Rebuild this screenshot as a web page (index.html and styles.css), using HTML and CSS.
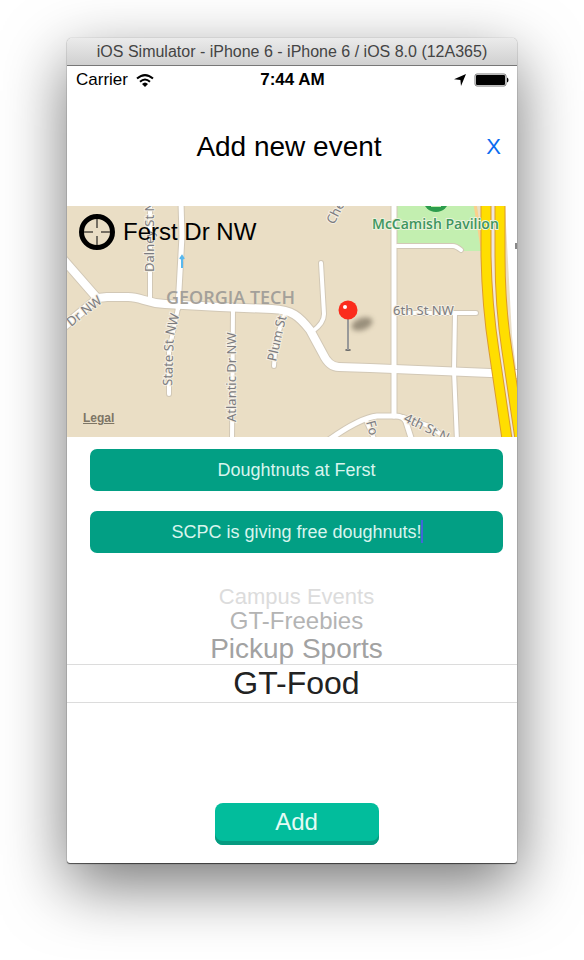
FILE: index.html
```html
<!DOCTYPE html>
<html lang="en">
<head>
    <meta charset="utf-8">
    <meta name="viewport" content="width=device-width, initial-scale=1.0" />
    <title>Add new event</title>
    <!-- Stylesheet -->
    <link rel="stylesheet" href="styles.css">
</head>
<body>
    <div class="window">
        <div class="title-bar">iOS Simulator - iPhone 6 - iPhone 6 / iOS 8.0 (12A365)</div>

        <div class="status-bar">
            <div class="carrier">
                <span>Carrier</span>
                <svg class="wifi" viewBox="0 0 18 13" width="18" height="13">
                    <path d="M1 4.6 Q9 -2.4 17 4.6" />
                    <path d="M4 7.8 Q9 3.2 14 7.8" />
                    <path class="dot" d="M6 10 Q9 7 12 10 L9 13 Z" />
                </svg>
            </div>
            <div class="time">7:44 AM</div>
            <div class="status-icons">
                <svg viewBox="0 0 12 12" width="12" height="12">
                    <path d="M12 0 L7 12 L6.4 6 L0 5.2 Z" />
                </svg>
                <svg viewBox="0 0 35 14" width="35" height="14">
                    <rect class="battery-case" x="1" y="1" width="31" height="12" rx="2" />
                    <rect x="2" y="2" width="29" height="10" rx="1" />
                    <path d="M33 4.5 Q34.5 5 34.5 7 Q34.5 9 33 9.5 Z" />
                </svg>
            </div>
        </div>

        <header class="header">
            <h1>Add new event</h1>
            <button type="button" class="close">X</button>
        </header>

        <form>
            <div class="map">
                <svg class="map-tiles" viewBox="0 0 450 231" preserveAspectRatio="xMidYMid slice">
                    <defs>
                        <filter id="blur" x="-50%" y="-50%" width="200%" height="200%">
                            <feGaussianBlur stdDeviation="2.5" />
                        </filter>
                        <g id="roads">
                            <path class="wide" d="M-4 53 L30 92 M-4 121 L31 92 L40 91 L61 91 C75 91 78 97 98 98 L153 101 L205 103 C225 104 232 110 243 124 L256 148 Q262 161 272 161 L303 162 L423 167 L452 168" />
                            <path class="mid" d="M114 -4 L115 30 L111 102" />
                            <path class="mid" d="M327 -4 V210" />
                            <path class="mid" d="M259 236 Q292 212 310 210 H328 Q337 210 339 216 L345 235" />
                            <path d="M111 102 L102 145 V188" />
                            <path d="M83 -4 V97" />
                            <path d="M166 103 L165 235" />
                            <path d="M218 108 Q208 130 207 160" />
                            <path d="M254 57 L257 108 Q257 117 246 125" />
                            <path d="M330 40 H386 Q389 40 394 44" />
                            <path d="M327 107 H409 M388 107 L387 165 L390 235" />
                            <path d="M336 211 L365 221 L380 234" />
                            <path d="M299 214 L308 235" />
                        </g>
                    </defs>
                    <rect class="land" width="450" height="231" />
                    <path class="park" d="M330 0 H410 L415 45 H394 L387 40 H330 Z" />
                    <path class="freeway-side" d="M438 0 H450 V170 L445 130 Z" />
                    <use href="#roads" class="road-edge" />
                    <use href="#roads" class="road" />
                    <path class="ramp" d="M408 -2 L416 48" />
                    <path class="freeway-gap" d="M425 0 V50 Q426 100 434 145 L449 231" />
                    <path class="freeway-edge" d="M419 -2 L419 50 Q420 100 427 145 L440 233" />
                    <path class="freeway" d="M419 -2 L419 50 Q420 100 427 145 L440 233" />
                    <path class="freeway-edge" d="M433 -2 L433 50 Q433 100 440 145 L453 233" />
                    <path class="freeway" d="M433 -2 L433 50 Q433 100 440 145 L453 233" />
                    <path class="one-way" d="M115 62 V50 M113 53 L115 50 L117 53" />
                    <circle class="park-badge" cx="369" cy="-7" r="13" />
                    <path class="park-icon" d="M364 0 H374" />

                    <g class="street">
                        <text transform="translate(87 66) rotate(-90)">Dalney St N</text>
                        <text transform="translate(4 121) rotate(-38)">Dr NW</text>
                        <text transform="translate(105 180) rotate(-88)">State St</text>
                        <text transform="translate(107 130) rotate(-76)">NW</text>
                        <text transform="translate(169 216) rotate(-90)">Atlantic Dr NW</text>
                        <text transform="translate(209 156) rotate(-77)">Plum St</text>
                        <text transform="translate(267 19) rotate(-63)">Che</text>
                        <text x="326" y="109">6th St NW</text>
                        <text transform="translate(336 215) rotate(26)">4th St N</text>
                        <text transform="translate(299 216) rotate(75)">Fo</text>
                    </g>
                    <text class="campus" x="99" y="98">GEORGIA TECH</text>
                    <text class="pavilion" x="305" y="23">McCamish Pavilion</text>
                    <path class="clipped-label" d="M449 37 V43" />

                    <ellipse class="pin-shadow" cx="295" cy="118" rx="11" ry="6" transform="rotate(-20 295 118)" />
                    <ellipse class="pin-foot" cx="281" cy="144" rx="3" ry="1" />
                    <path class="pin-needle" d="M281 112 V144" />
                    <circle class="pin-head" cx="281" cy="104" r="9.5" />
                    <circle class="pin-shine" cx="278" cy="101" r="2" />
                </svg>
                <div class="location">
                    <svg viewBox="0 0 36 36" width="36" height="36">
                        <circle cx="18" cy="18" r="15.5" />
                        <path d="M18 5 V14 M18 22 V31 M5 18 H14 M22 18 H31" />
                    </svg>
                    <span>Ferst Dr NW</span>
                </div>
                <a href="#" class="legal">Legal</a>
            </div>

            <div class="fields">
                <div class="field">
                    <input type="text" aria-label="Event name" value="Doughtnuts at Ferst" />
                </div>
                <div class="field">
                    <input type="text" aria-label="Description" value="SCPC is giving free doughnuts!" />
                    <span class="caret"></span>
                </div>
            </div>

            <!-- Category wheel -->
            <div class="picker" role="radiogroup" aria-label="Category">
                <label class="far"><input type="radio" name="category" />Campus Events</label>
                <label class="middle"><input type="radio" name="category" />GT-Freebies</label>
                <label class="near"><input type="radio" name="category" />Pickup Sports</label>
                <label class="selected"><input type="radio" name="category" checked />GT-Food</label>
            </div>

            <div class="actions">
                <button type="button" class="add">Add</button>
            </div>
        </form>
    </div>
</body>
</html>
```
FILE: styles.css
```css
* {
    padding: 0;
    margin: 0;
    box-sizing: border-box;
}

body {
    background-color: #fff;
    padding: 38px 67px 96px;
    font-family: "Liberation Sans", Arial, sans-serif;
    color: #000;
}

button,
input {
    font-family: inherit;
    border: none;
}

.window {
    background-color: #fff;
    border-radius: 5px 5px 3px 3px;
    box-shadow: 0 1px 1px rgba(0, 0, 0, 0.6), 0 0 1px rgba(0, 0, 0, 0.5),
        0 22px 64px rgba(0, 0, 0, 0.54);
}

.title-bar {
    height: 28px;
    line-height: 28px;
    text-align: center;
    font-size: 16px;
    color: #444;
    background: linear-gradient(#ebebeb, #d0d0d0);
    border-bottom: 1px solid #777;
    border-radius: 5px 5px 0 0;
}

/* status bar */
.status-bar {
    display: grid;
    grid-template-columns: 1fr auto 1fr;
    align-items: center;
    height: 28px;
    padding: 0 8px 0 9px;
    font-size: 17px;
}

.carrier {
    display: flex;
    align-items: center;
    gap: 8px;
}

.wifi {
    fill: none;
    stroke: #000;
    stroke-width: 2;
}

.wifi .dot {
    fill: #000;
    stroke: none;
}

.time {
    font-weight: bold;
}

.status-icons {
    display: flex;
    justify-content: flex-end;
    align-items: center;
    gap: 8px;
}

.battery-case {
    fill: none;
    stroke: #777;
}

/* header */
.header {
    display: grid;
    grid-template-columns: 1fr auto 1fr;
    align-items: center;
    height: 112px;
    padding: 0 16px 6px 10px;
}

.header h1 {
    grid-column: 2;
    font-size: 28px;
    font-weight: normal;
}

.close {
    justify-self: end;
    background: none;
    font-size: 22px;
    color: #0a6cf0;
}

/* map */
.map {
    position: relative;
    height: 231px;
    overflow: hidden;
}

.map-tiles {
    display: block;
    width: 100%;
    height: 100%;
}

.land {
    fill: #eadec5;
}

.park {
    fill: #c3efb0;
}

/* the roads are drawn twice, first a little wider for their edge */
.road,
.road-edge {
    fill: none;
    stroke-linecap: round;
    stroke-linejoin: round;
}

.road {
    --edge: 0px;
    stroke: #fff;
}

.road-edge {
    --edge: 2px;
    stroke: #d2c8b6;
}

#roads path {
    stroke-width: calc(4px + var(--edge));
}

#roads .wide {
    stroke-width: calc(8px + var(--edge));
}

#roads .mid {
    stroke-width: calc(5px + var(--edge));
}

.freeway-side {
    fill: #fff;
}

.ramp,
.freeway,
.freeway-edge,
.freeway-gap {
    fill: none;
}

.ramp {
    stroke: #fbd08c;
    stroke-width: 3;
}

.freeway-gap {
    stroke: #efe6dc;
    stroke-width: 6;
}

.freeway-edge {
    stroke: #dc9a2c;
    stroke-width: 11;
}

.freeway {
    stroke: #ffde00;
    stroke-width: 9;
}

.one-way {
    fill: none;
    stroke: #58b8ee;
    stroke-width: 2;
}

.park-badge {
    fill: #2c9c4c;
}

.park-icon {
    fill: none;
    stroke: #c3efb0;
    stroke-width: 2;
}

.street text {
    font-family: "Noto Sans", sans-serif;
    font-size: 13px;
    fill: #7c7c80;
    stroke: #f4eee2;
    stroke-width: 2;
    paint-order: stroke;
}

.campus,
.pavilion {
    font-family: "Open Sans", sans-serif;
    font-weight: 600;
}

.campus {
    font-size: 18px;
    fill: #a3a09a;
}

.pavilion {
    font-size: 14px;
    fill: #3f9560;
    stroke: #eaf3dc;
    stroke-width: 2;
    paint-order: stroke;
}

.clipped-label {
    stroke: #888;
    stroke-width: 2;
}

.pin-shadow {
    fill: #655c4c;
    opacity: 0.6;
    filter: url(#blur);
}

.pin-foot {
    fill: #666;
}

.pin-needle {
    stroke: #999;
    stroke-width: 2;
}

.pin-head {
    fill: #fb2c1c;
}

.pin-shine {
    fill: #fff;
}

.location {
    position: absolute;
    top: 8px;
    left: 12px;
    display: flex;
    align-items: center;
    gap: 8px;
    font-size: 24px;
}

.location svg {
    fill: none;
    stroke: #000;
}

.location circle {
    stroke-width: 5;
}

.legal {
    position: absolute;
    left: 16px;
    bottom: 12px;
    font-size: 12px;
    font-weight: bold;
    color: #7d7565;
}

/* text fields */
.fields {
    display: flex;
    flex-direction: column;
    gap: 20px;
    padding: 12px 14px 0 23px;
}

.field {
    position: relative;
}

.field input {
    display: block;
    width: 100%;
    height: 42px;
    text-align: center;
    font-size: 18px;
    color: #d8f5ee;
    background-color: #029f84;
    border-radius: 7px;
}

.caret {
    position: absolute;
    top: 9px;
    left: calc(50% + 124px);
    width: 2px;
    height: 23px;
    background-color: #4166d8;
}

/* category wheel */
.picker {
    margin-top: 32px;
}

.picker label {
    display: block;
    padding: 0 14px 0 23px;
    text-align: center;
}

.picker input {
    position: absolute;
    appearance: none;
}

.picker .far {
    font-size: 22px;
    line-height: 24px;
    color: #dcdcdc;
}

.picker .middle {
    font-size: 24px;
    line-height: 24px;
    color: #b4b4b4;
}

.picker .near {
    font-size: 28px;
    line-height: 31px;
    color: #a2a2a2;
}

.picker .selected {
    font-size: 32px;
    line-height: 37px;
    color: #222;
    border-top: 1px solid #dcdcdc;
    border-bottom: 1px solid #dcdcdc;
}

.actions {
    padding: 100px 14px 18px 23px;
    text-align: center;
}

.add {
    display: block;
    width: 164px;
    height: 42px;
    margin: 0 auto;
    padding-bottom: 4px;
    font-size: 24px;
    color: #e4fbf5;
    background-color: #02bd9c;
    border-radius: 8px;
    box-shadow: inset 0 -4px 0 #069a80;
}
```
